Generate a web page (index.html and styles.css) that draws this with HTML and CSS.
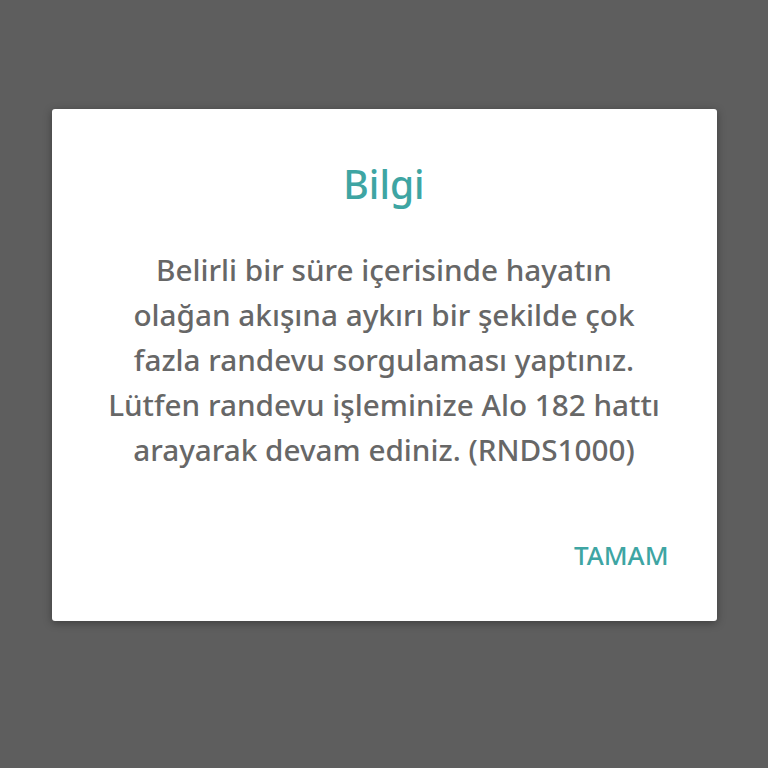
FILE: index.html
```html
<html lang="tr">
<head>
  <meta charset="UTF-8" />
  <meta name="viewport" content="width=device-width, initial-scale=1.0">
  <title>Bilgi</title>
  <link rel="stylesheet" href="styles.css">
</head>
<body>
  <div class="dialog">
    <div class="dialog-title">Bilgi</div>
    <p class="dialog-message">
      Belirli bir süre içerisinde hayatın<br>
      olağan akışına aykırı bir şekilde çok<br>
      fazla randevu sorgulaması yaptınız.<br>
      Lütfen randevu işleminize Alo 182 hattı<br>
      arayarak devam ediniz. (RNDS1000)
    </p>
    <div class="dialog-actions">
      <button class="dialog-button">TAMAM</button>
    </div>
  </div>
</body>
</html>
```

FILE: styles.css
```css
:root {
  --teal: #3ea5a3;
  --text-grey: #676767;
}

body {
  margin: 0;
  height: 100vh;
  box-sizing: border-box;
  padding-top: 109px;
  background: #5e5e5e;
  font-family: 'Noto Sans', 'Open Sans', Arial, sans-serif;
  display: flex;
  justify-content: center;
  align-items: flex-start;
}

.dialog {
  width: 665px;
  height: 512px;
  box-sizing: border-box;
  background: #ffffff;
  border-radius: 3px;
  box-shadow: 0 2px 8px rgba(0,0,0,0.35);
  padding: 53px 30px 0 30px;
  display: flex;
  flex-direction: column;
}

.dialog-title {
  text-align: center;
  color: var(--teal);
  font-size: 39px;
  font-weight: 500;
  line-height: 44px;
}

.dialog-message {
  margin: 41px 0 0 0;
  text-align: center;
  color: var(--text-grey);
  font-size: 29.7px;
  font-weight: 500;
  line-height: 45px;
}

.dialog-actions {
  display: flex;
  justify-content: flex-end;
  margin-top: 65px;
  padding-right: 18px;
}

.dialog-button {
  background: none;
  border: none;
  padding: 0;
  font-family: inherit;
  font-size: 26px;
  font-weight: 500;
  color: var(--teal);
  cursor: pointer;
}
```
